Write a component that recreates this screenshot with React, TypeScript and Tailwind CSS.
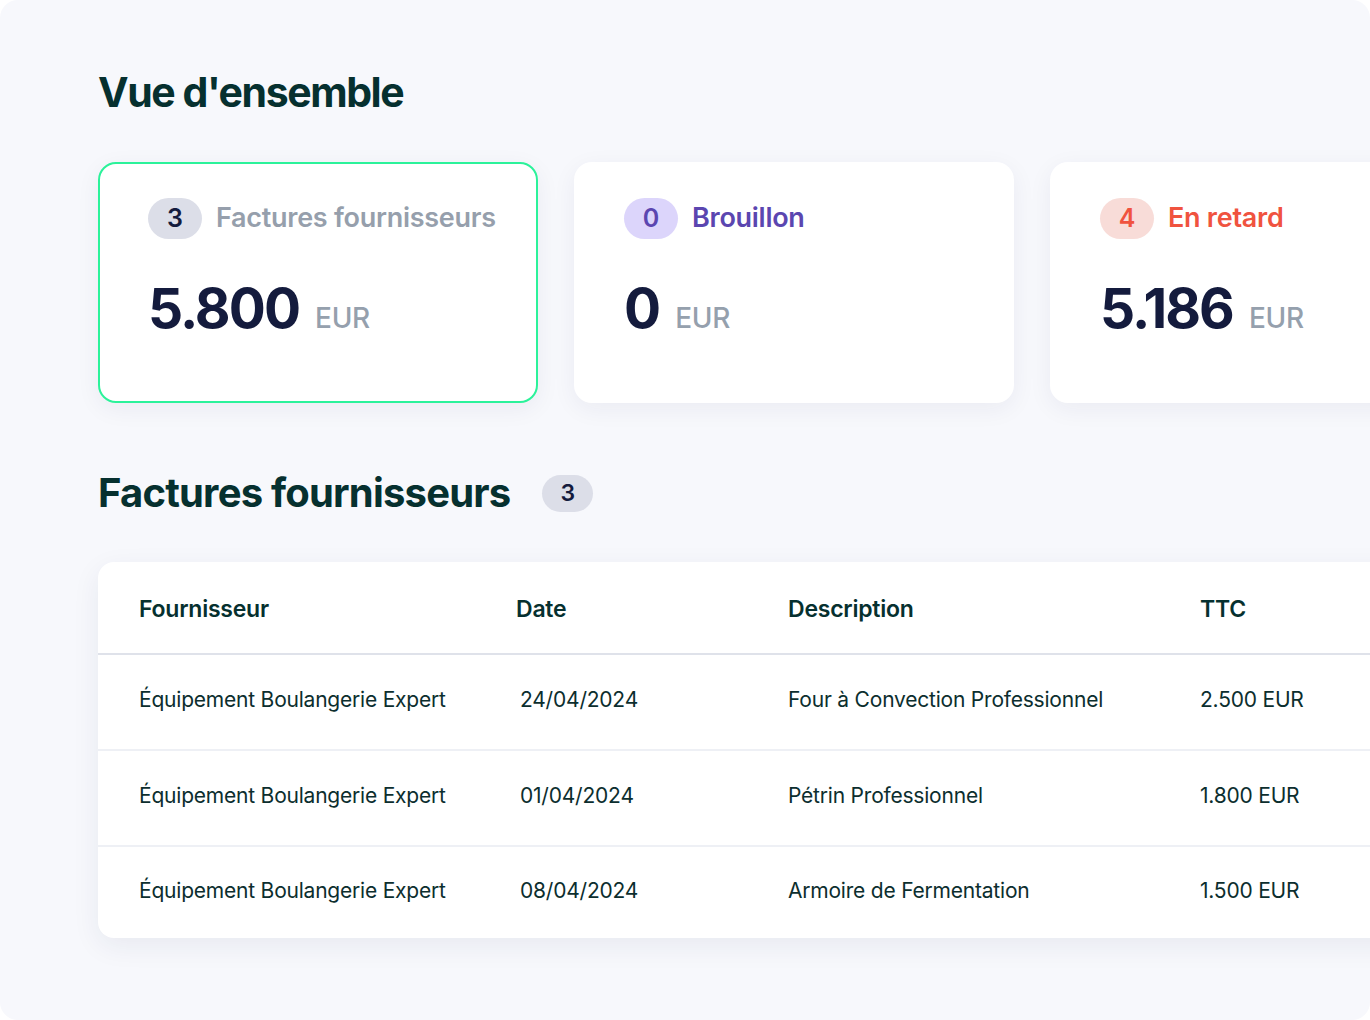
const font = { fontFamily: "Inter, 'Noto Sans', sans-serif" };

type Stat = {
    count: number;
    label: string;
    amount: string;
    badge: string;
    labelColor: string;
    active?: boolean;
};

const stats: Stat[] = [
    {
        count: 3,
        label: "Factures fournisseurs",
        amount: "5.800",
        badge: "bg-[#dcdee8] text-[#141b3d]",
        labelColor: "text-[#969fac]",
        active: true,
    },
    {
        count: 0,
        label: "Brouillon",
        amount: "0",
        badge: "bg-[#dcd5fb] text-[#5b46b0]",
        labelColor: "text-[#5b46b0]",
    },
    {
        count: 4,
        label: "En retard",
        amount: "5.186",
        badge: "bg-[#f8dcd8] text-[#f0533f]",
        labelColor: "text-[#f0533f]",
    },
];

const rows = [
    ["Équipement Boulangerie Expert", "24/04/2024", "Four à Convection Professionnel", "2.500 EUR"],
    ["Équipement Boulangerie Expert", "01/04/2024", "Pétrin Professionnel", "1.800 EUR"],
    ["Équipement Boulangerie Expert", "08/04/2024", "Armoire de Fermentation", "1.500 EUR"],
];

function StatCard({ stat }: { stat: Stat }) {
    return (
        <div
            className={`shrink-0 w-[440px] h-[241px] rounded-[18px] bg-white pl-[48px] pt-[34px] shadow-[0_6px_24px_rgba(30,40,90,0.06)] ${
                stat.active ? "border-2 border-[#2bf29a]" : "border-2 border-transparent"
            }`}
        >
            <div className="flex items-center gap-[14px]">
                <span
                    className={`flex items-center justify-center h-[41px] min-w-[54px] rounded-full text-[25px] font-semibold ${stat.badge}`}
                >
                    {stat.count}
                </span>
                <span className={`text-[27px] font-semibold tracking-[-0.01em] ${stat.labelColor}`}>
                    {stat.label}
                </span>
            </div>
            <div className="mt-[42px] flex items-baseline gap-[16px]">
                <span className="text-[55px] leading-none font-bold tracking-[-0.035em] text-[#141b3d]">
                    {stat.amount}
                </span>
                <span className="text-[28px] leading-none font-medium tracking-[-0.01em] text-[#95a0ad]">EUR</span>
            </div>
        </div>
    );
}

export default function App() {
    return (
        <div className="w-[1370px] h-[1020px] bg-white" style={font}>
            <div className="w-full h-full rounded-[18px] bg-[#f7f8fc] overflow-hidden pl-[98px] pt-[66px]">
                <h1 className="text-[41px] leading-[52px] font-bold tracking-[-0.035em] text-[#06302f]">
                    Vue d'ensemble
                </h1>

                <div className="mt-[44px] flex gap-[36px]">
                    {stats.map((s) => (
                        <StatCard key={s.label} stat={s} />
                    ))}
                </div>

                <div className="mt-[64px] flex items-center gap-[32px]">
                    <h2 className="text-[40px] leading-[52px] font-bold tracking-[-0.02em] text-[#06302f]">
                        Factures fournisseurs
                    </h2>
                    <span className="flex items-center justify-center h-[37px] w-[51px] rounded-full bg-[#dcdee8] text-[23px] font-semibold text-[#141b3d]">
                        3
                    </span>
                </div>

                <div className="mt-[43px] w-[1320px] rounded-[16px] bg-white shadow-[0_8px_28px_rgba(30,40,90,0.07)] overflow-hidden">
                    <div className="grid grid-cols-[377px_272px_412px_1fr] pl-[41px] pt-[3px] h-[93px] items-center border-b-2 border-[#dfe2ea] text-[23px] font-semibold tracking-[-0.01em] text-[#06302f]">
                        <span>Fournisseur</span>
                        <span>Date</span>
                        <span>Description</span>
                        <span>TTC</span>
                    </div>
                    {rows.map((r, i) => (
                        <div
                            key={i}
                            className={`grid grid-cols-[377px_272px_412px_1fr] pl-[41px] items-center pb-[4px] text-[21px] tracking-[-0.01em] text-[#0c2e2e] ${
                                i < rows.length - 1 ? "h-[96px] border-b-2 border-[#eef0f5]" : "h-[91px]"
                            }`}
                        >
                            <span>{r[0]}</span>
                            <span className="pl-[4px]">{r[1]}</span>
                            <span>{r[2]}</span>
                            <span>{r[3]}</span>
                        </div>
                    ))}
                </div>
            </div>
        </div>
    );
}
